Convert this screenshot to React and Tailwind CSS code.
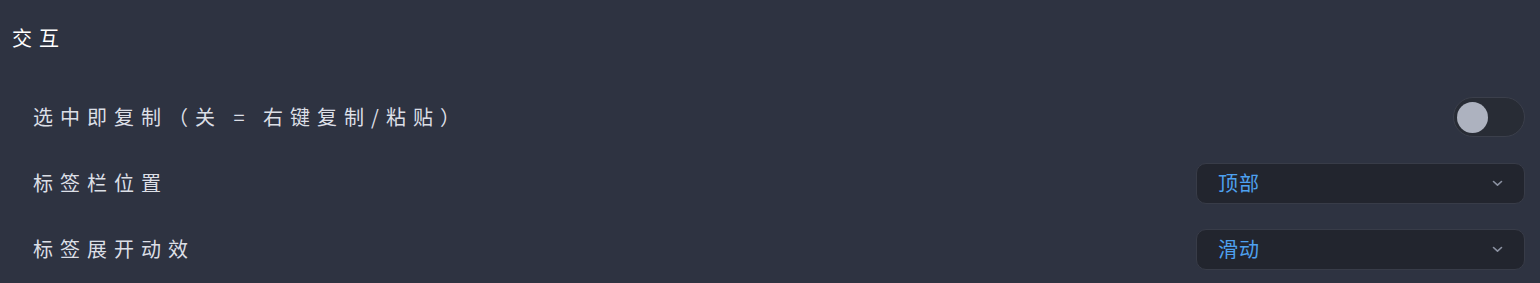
import React from 'react';

const font = { fontFamily: '"Noto Sans CJK SC", "Noto Sans", sans-serif' };

const Chevron = () => (
  <svg width="11" height="7" viewBox="0 0 11 7" fill="none" className="text-[#8b91a1]">
    <path d="M1.5 1.5 L5.5 5.2 L9.5 1.5" stroke="currentColor" strokeWidth="1.6" strokeLinecap="round" strokeLinejoin="round" />
  </svg>
);

const Select = ({ value }) => (
  <div className="w-[329px] h-[41px] rounded-[10px] bg-[#22252e] border border-[#383c48] flex items-center justify-between pl-[21px] pr-[21px]">
    <span className="text-[20px] leading-none tracking-[1px] text-[#4ea1f0]">{value}</span>
    <Chevron />
  </div>
);

const Toggle = () => (
  <div className="w-[72px] h-10 rounded-full bg-[#282c35] border border-[#3b3f4b] flex items-center px-[3px]">
    <div className="w-[31px] h-[31px] rounded-full bg-[#adb2bf]" />
  </div>
);

const Row = ({ label, children }) => (
  <div className="h-[66px] flex items-center justify-between">
    <span className="text-[20px] leading-7 tracking-[7px] text-[#dcdfe6]">{label}</span>
    {children}
  </div>
);

export default function App() {
  return (
    <div className="min-h-screen bg-[#2e3341] pl-3 pr-[15px] pt-6" style={font}>
      <h2 className="text-[20px] leading-7 tracking-[7px] text-white font-normal">交互</h2>
      <div className="mt-8 pl-[21px]">
        <Row label="选中即复制（关 = 右键复制/粘贴）">
          <Toggle />
        </Row>
        <Row label="标签栏位置">
          <Select value="顶部" />
        </Row>
        <Row label="标签展开动效">
          <Select value="滑动" />
        </Row>
      </div>
    </div>
  );
}
